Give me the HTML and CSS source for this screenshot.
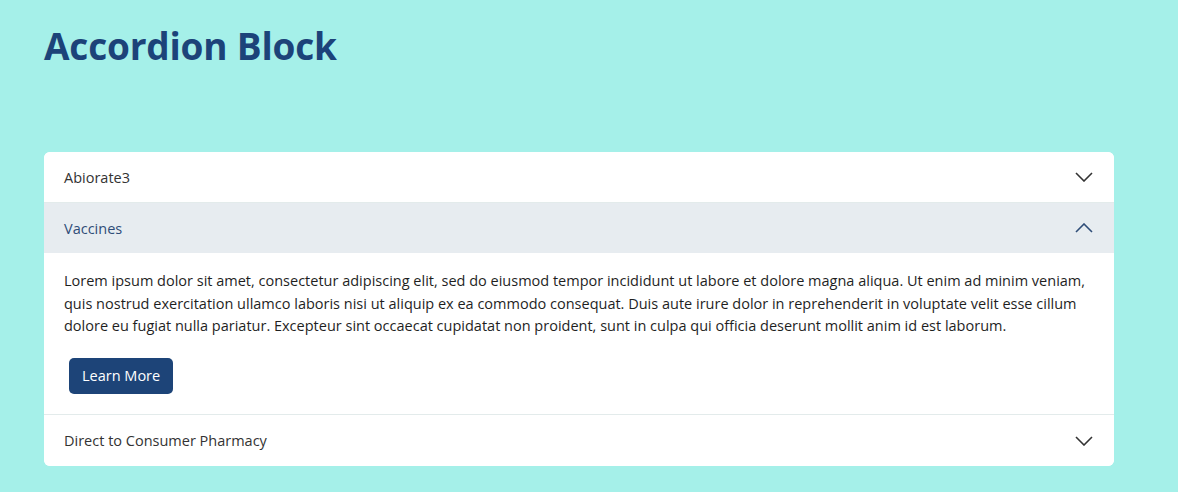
FILE: index.html
```html
<!DOCTYPE html>
<html lang="en">
<head>
<meta charset="utf-8">
<title>Accordion Block</title>
<link rel="stylesheet" href="styles.css">
</head>
<body>
<main class="page">
  <h1 class="title">Accordion Block</h1>
  <section class="accordion">
    <div class="item">
      <button class="header">
        <span class="label">Abiorate3</span>
        <svg class="chev" width="18" height="10" viewBox="0 0 18 10"><path d="M1 1 L9 9 L17 1" fill="none" stroke="currentColor" stroke-width="1.6"/></svg>
      </button>
    </div>
    <div class="item open">
      <button class="header">
        <span class="label">Vaccines</span>
        <svg class="chev" width="18" height="10" viewBox="0 0 18 10"><path d="M1 9 L9 1 L17 9" fill="none" stroke="currentColor" stroke-width="1.6"/></svg>
      </button>
      <div class="body">
        <p class="text">Lorem ipsum dolor sit amet, consectetur adipiscing elit, sed do eiusmod tempor incididunt ut labore et dolore magna aliqua. Ut enim ad minim veniam, quis nostrud exercitation ullamco laboris nisi ut aliquip ex ea commodo consequat. Duis aute irure dolor in reprehenderit in voluptate velit esse cillum dolore eu fugiat nulla pariatur. Excepteur sint occaecat cupidatat non proident, sunt in culpa qui officia deserunt mollit anim id est laborum.</p>
        <a class="btn" href="#">Learn More</a>
      </div>
    </div>
    <div class="item last">
      <button class="header">
        <span class="label">Direct to Consumer Pharmacy</span>
        <svg class="chev" width="18" height="10" viewBox="0 0 18 10"><path d="M1 1 L9 9 L17 1" fill="none" stroke="currentColor" stroke-width="1.6"/></svg>
      </button>
    </div>
  </section>
</main>
</body>
</html>
```
FILE: styles.css
```css
html, body {
  margin: 0;
  padding: 0;
}
body {
  background: #a5f0e9;
  font-family: "Open Sans", "Noto Sans", Arial, sans-serif;
  color: #222;
  height: 492px;
  overflow: hidden;
}
.page {
  padding: 20px 64px 0 44px;
}
.title {
  margin: 0;
  font-size: 37px;
  font-weight: 700;
  color: #1c4379;
  line-height: 52px;
  letter-spacing: -0.2px;
}
.accordion {
  margin-top: 80px;
  background: #fff;
  border-radius: 6px;
  overflow: hidden;
}
.item + .item {
  border-top: 1px solid #e3ebeb;
}
.header {
  display: flex;
  align-items: center;
  justify-content: space-between;
  width: 100%;
  height: 50px;
  padding: 0 20px;
  border: 0;
  background: #fff;
  font: inherit;
  font-size: 14.5px;
  color: #333;
  text-align: left;
  cursor: pointer;
}
.last .header {
  height: 51px;
}
.open .header {
  background: #e7ecf0;
  color: #2f4d78;
}
.chev {
  display: block;
  margin-right: 1px;
}
.body {
  display: flex;
  flex-direction: column;
  align-items: flex-start;
  padding: 17px 20px 20px;
}
.text {
  margin: 0;
  font-size: 14.5px;
  line-height: 22.5px;
  color: #1f1f1f;
}
.btn {
  display: block;
  margin: 20.5px 0 0 5px;
  padding: 0 13px;
  height: 36px;
  line-height: 36px;
  background: #1d4478;
  color: #fff;
  border-radius: 5px;
  font-size: 14.5px;
  text-decoration: none;
}
```
